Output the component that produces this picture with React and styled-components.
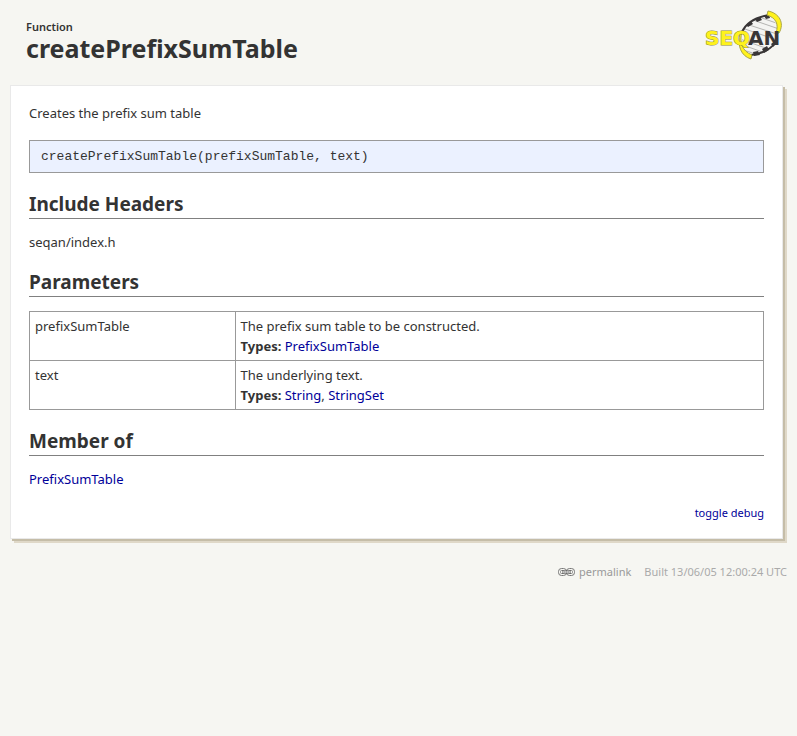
import React from "react";
import styled, { createGlobalStyle } from "styled-components";

const GlobalStyle = createGlobalStyle`
  body {
    margin: 0;
    background: #f6f6f2;
    color: #333333;
    font-family: "Lucida Grande", "Noto Sans", sans-serif;
    font-size: 13px;
    line-height: 20px;
  }
`;

const Page = styled.div`
  padding: 10px;
`;

const Header = styled.header`
  display: flex;
  justify-content: space-between;
  align-items: flex-start;
  height: 75px;
  padding: 0 5px 0 16px;
  box-sizing: border-box;
`;

const Titles = styled.div`
  padding-top: 10px;
`;

const Kind = styled.div`
  font-size: 11px;
  font-weight: 600;
  line-height: 14px;
`;

const Title = styled.h1`
  margin: 0;
  font-size: 25px;
  font-weight: 700;
  line-height: 28px;
`;

const LogoLink = styled.a`
  display: block;
  line-height: 0;
`;

const Panel = styled.main`
  margin-right: 4px;
  padding: 18px 18px 16px;
  background: #ffffff;
  border: 1px solid #e9e9e9;
  box-shadow: 2px 2px 0 #c5bda8, 4px 4px 0 #dfd8c8;
`;

const Text = styled.p`
  margin: 0;
  line-height: 18px;
`;

const Signature = styled.pre`
  margin: 18px 0 0;
  padding: 6px 11px 5px;
  background: #ebf1ff;
  border: 1px solid #999999;
  font-family: "Liberation Mono", monospace;
  font-size: 13px;
  line-height: 20px;
`;

const Section = styled.section`
  margin-top: 17px;
`;

const Heading = styled.h2`
  margin: 0 0 14px;
  padding-top: 1px;
  border-bottom: 1px solid #808080;
  font-size: 19px;
  font-weight: 700;
  line-height: 27px;
`;

const Table = styled.table`
  width: 100%;
  border-collapse: collapse;
  table-layout: fixed;
`;

const NameCell = styled.th`
  width: 28%;
  padding: 4px 5px;
  border: 1px solid #999999;
  font-weight: 400;
  text-align: left;
  vertical-align: top;
  box-sizing: border-box;
`;

const InfoCell = styled.td`
  padding: 4px 5px;
  border: 1px solid #999999;
  vertical-align: top;
`;

const Link = styled.a`
  color: #000099;
  text-decoration: none;
`;

const DebugRow = styled.div`
  display: flex;
  justify-content: flex-end;
  margin-top: 16px;
`;

const DebugButton = styled.button`
  padding: 0;
  border: 0;
  background: none;
  color: #000099;
  font: inherit;
  font-size: 11px;
  line-height: 18px;
  cursor: pointer;
`;

const Footer = styled.footer`
  display: flex;
  justify-content: flex-end;
  gap: 13px;
  margin-top: 23px;
  color: #aaaaaa;
  font-size: 11px;
`;

const Permalink = styled.a`
  display: flex;
  align-items: center;
  gap: 4px;
  color: #999999;
  text-decoration: none;
`;

function Logo() {
  return (
    <svg width="78" height="52" viewBox="0 0 78 52" role="img" aria-label="SeqAn">
      <defs>
        <clipPath id="helix">
          <path d="M38 34C36 18 48 9 64 6c10 4 12 17 7 28-5 6-13 10-23 11-6-1-9-5-10-11z" />
        </clipPath>
      </defs>
      <path d="M38 34C36 18 48 9 64 6c10 4 12 17 7 28-5 6-13 10-23 11-6-1-9-5-10-11z" fill="#f4f4f2" />
      <g clipPath="url(#helix)" stroke="#b4b4b2" strokeWidth="1">
        <path d="M52 6l26 9M46 9l32 11M42 14l34 11M38 18l38 13M36 29l34 12M36 34l28 10M36 39l22 7" />
      </g>
      <path d="M38 22C42 13 52 7 65 5" fill="none" stroke="#393637" strokeWidth="2" />
      <path d="M47 45C57 44 66 40 72 32" fill="none" stroke="#393637" strokeWidth="2" />
      <path d="M42 15l5-4 2 3-5 3zM51 9l5-2 2 3-5 2zM60 6l5-2 1 4-4 1zM49 42l5-1 2 4-6 1zM58 39l5-3 2 4-5 3zM67 34l4-3 2 2-4 4z" fill="#393637" />
      <path d="M64 1C75 3 81 13 75 23h-3C75 14 72 8 63 5z" fill="#fff21c" stroke="#aaa545" strokeWidth="1" />
      <path d="M38 22c-3 10 0 19 10 23l-1 4C37 46 33 36 36 23z" fill="#fff21c" stroke="#aaa545" strokeWidth="1" />
      <g fontFamily='"DejaVu Sans", sans-serif' fontWeight="700" fontSize="20">
        <text x="1" y="35" fill="#fff21c" stroke="#8f8b35" strokeWidth="1" paintOrder="stroke">SEQ</text>
        <text x="44" y="35" fill="#393637">AN</text>
      </g>
    </svg>
  );
}

function ChainIcon() {
  return (
    <svg width="17" height="8" viewBox="0 0 17 8" fill="none" aria-hidden="true">
      <rect x="0.5" y="0.5" width="8" height="7" rx="3" stroke="#777777" />
      <rect x="8.5" y="0.5" width="8" height="7" rx="3" stroke="#777777" />
      <rect x="2.5" y="2.5" width="4" height="3" rx="1" stroke="#888888" />
      <rect x="10.5" y="2.5" width="4" height="3" rx="1" stroke="#888888" />
      <path d="M4 3h9M4 5h9" stroke="#555555" />
      <path d="M5 4h7" stroke="#dddddd" />
    </svg>
  );
}

const parameters = [
  {
    name: "prefixSumTable",
    description: "The prefix sum table to be constructed.",
    types: ["PrefixSumTable"],
  },
  { name: "text", description: "The underlying text.", types: ["String", "StringSet"] },
];

export default function App() {
  return (
    <>
      <GlobalStyle />
      <Page>
        <Header>
          <Titles>
            <Kind>Function</Kind>
            <Title>createPrefixSumTable</Title>
          </Titles>
          <LogoLink href="#home">
            <Logo />
          </LogoLink>
        </Header>
        <Panel>
          <Text>Creates the prefix sum table</Text>
          <Signature>createPrefixSumTable(prefixSumTable, text)</Signature>
          <Section>
            <Heading>Include Headers</Heading>
            <Text>seqan/index.h</Text>
          </Section>
          <Section>
            <Heading>Parameters</Heading>
            <Table>
              <tbody>
                {parameters.map((parameter) => (
                  <tr key={parameter.name}>
                    <NameCell scope="row">{parameter.name}</NameCell>
                    <InfoCell>
                      <div>{parameter.description}</div>
                      <strong>Types:</strong>{" "}
                      {parameter.types.map((type, index) => (
                        <React.Fragment key={type}>
                          {index > 0 && ", "}
                          <Link href={`#${type}`}>{type}</Link>
                        </React.Fragment>
                      ))}
                    </InfoCell>
                  </tr>
                ))}
              </tbody>
            </Table>
          </Section>
          <Section>
            <Heading>Member of</Heading>
            <Text>
              <Link href="#PrefixSumTable">PrefixSumTable</Link>
            </Text>
          </Section>
          <DebugRow>
            <DebugButton type="button">toggle debug</DebugButton>
          </DebugRow>
        </Panel>
        <Footer>
          <Permalink href="#permalink">
            <ChainIcon />
            permalink
          </Permalink>
          <span>Built 13/06/05 12:00:24 UTC</span>
        </Footer>
      </Page>
    </>
  );
}
